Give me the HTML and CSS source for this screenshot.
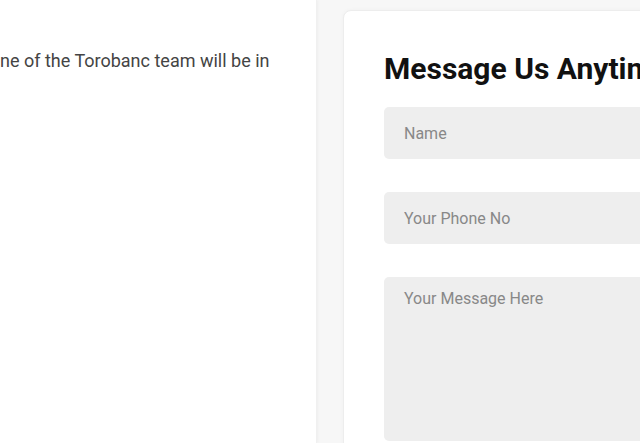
FILE: index.html
```html
<!DOCTYPE html>
<html>
<head>
<meta charset="utf-8">
<link rel="stylesheet" href="styles.css">
</head>
<body>
<div class="page">
  <section class="info">
    <p class="lead">ne of the Torobanc team will be in</p>
  </section>
  <section class="card">
    <h2 class="title">Message Us Anytime</h2>
    <form class="form">
      <input class="field" type="text" placeholder="Name">
      <input class="field" type="text" placeholder="Your Phone No">
      <textarea class="field area" placeholder="Your Message Here"></textarea>
    </form>
  </section>
</div>
</body>
</html>
```
FILE: styles.css
```css
html, body {
  margin: 0;
  padding: 0;
  height: 100%;
  overflow: hidden;
}
body {
  background: #f7f7f7;
  font-family: Roboto, "Liberation Sans", sans-serif;
}
.page {
  display: flex;
  height: 443px;
  width: 900px;
  align-items: flex-start;
}
.info {
  width: 317px;
  height: 443px;
  flex: none;
  background: #fff;
  box-shadow: 1px 0 3px rgba(0,0,0,0.04);
  border-right: 1px solid #f0f0f0;
  box-sizing: border-box;
  padding-top: 49px;
}
.lead {
  margin: 0;
  font-size: 18px;
  line-height: 24px;
  color: #444;
}
.card {
  flex: none;
  margin-left: 26px;
  margin-top: 10px;
  width: 520px;
  height: 520px;
  background: #fff;
  border: 1px solid #ededed;
  border-radius: 8px;
  box-sizing: border-box;
  padding: 38px 40px 0 40px;
  box-shadow: 0 0 4px rgba(0,0,0,0.03);
}
.title {
  margin: 0;
  font-size: 30px;
  line-height: 40px;
  font-weight: 700;
  color: #111;
}
.form {
  display: flex;
  flex-direction: column;
  gap: 33px;
  margin-top: 18px;
}
.field {
  display: block;
  width: 100%;
  box-sizing: border-box;
  height: 52px;
  border: none;
  border-radius: 5px;
  background: #eeeeee;
  padding: 0 20px;
  font-family: Roboto, "Liberation Sans", sans-serif;
  font-size: 16px;
  color: #333;
  outline: none;
}
.field::placeholder {
  color: #888;
}
.area {
  height: 164px;
  padding-top: 12px;
  resize: none;
}
```
